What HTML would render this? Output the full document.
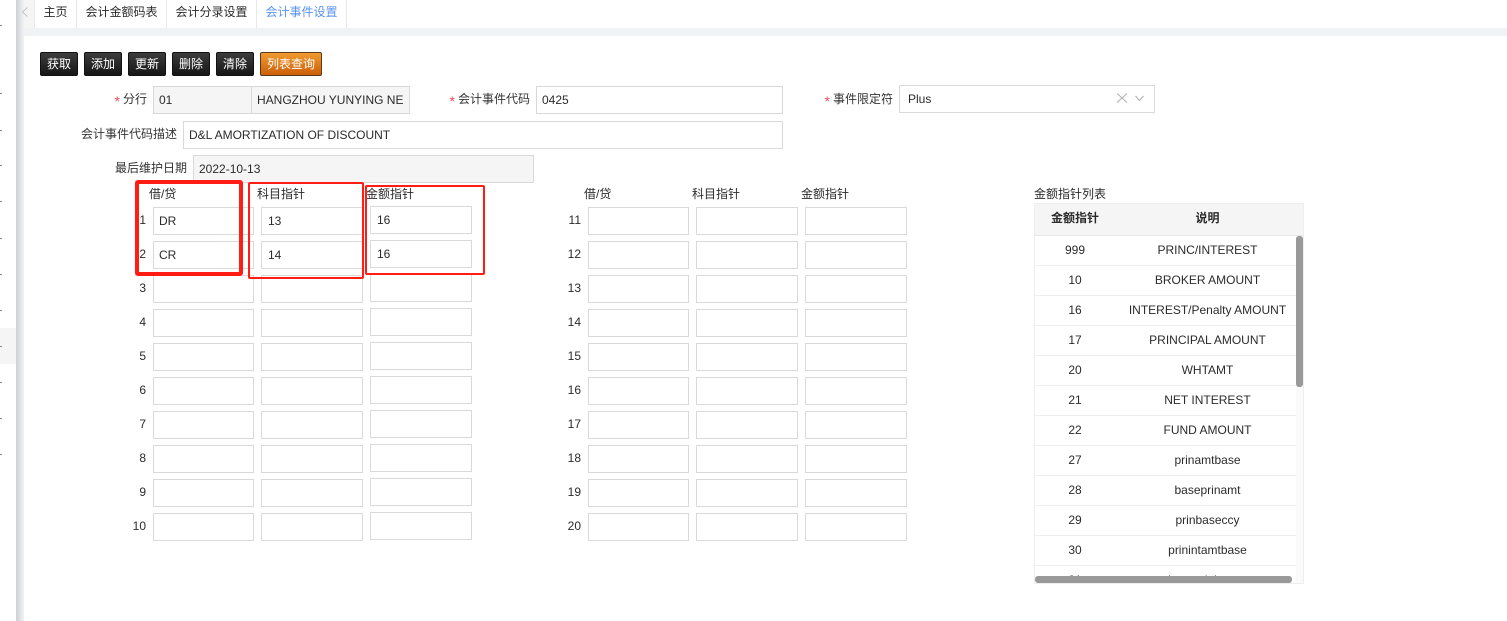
<!DOCTYPE html>
<html lang="zh"><head><meta charset="utf-8"><title>会计事件设置</title>
<style>
html,body{margin:0;padding:0;background:#fff;}
body{position:relative;width:1507px;height:621px;overflow:hidden;font:12px/14px "Liberation Sans","Noto Sans CJK SC",sans-serif;color:#2b2b2b;}
div,span{box-sizing:border-box;}
.a{position:absolute;}
.t{position:absolute;white-space:nowrap;}
.tab{position:absolute;top:0;height:28px;line-height:24px;text-align:center;border-right:1px solid #e8e8e8;background:#fff;color:#2b2b2b;}
.b{position:absolute;top:52px;height:24px;line-height:22px;text-align:center;color:#fff;border:1px solid #111;border-radius:2px;background:linear-gradient(#3c3c3c,#161616);}
.i{position:absolute;height:28px;border:1px solid #d9d9d9;background:#fff;line-height:26px;padding-left:5px;color:#2b2b2b;white-space:nowrap;overflow:hidden;}
.d{background:#f5f5f5;}
.l{position:absolute;text-align:right;white-space:nowrap;line-height:14px;color:#333;}
.s{color:#f5475f;margin-right:3px;font-size:14px;position:relative;top:3px;line-height:10px;}
.n{position:absolute;text-align:right;width:20px;line-height:14px;color:#2b2b2b;}
.k{position:absolute;width:2px;height:1px;left:0;background:#888;}
.r{position:absolute;left:1035px;width:261px;height:30px;line-height:29px;border-bottom:1px solid #eee;background:#fff;}
.r span{position:absolute;text-align:center;top:0;white-space:nowrap;}
.r .c1{left:0;width:80px;}
.r .c2{left:80px;width:185px;}
.box{position:absolute;border:2px solid #ff1d14;border-radius:2px;}
</style></head><body>

<div class="a" style="left:0;top:328px;width:16px;height:36px;background:#f5f5f5"></div>
<div class="k" style="top:25px"></div><div class="k" style="top:93px"></div><div class="k" style="top:130px"></div><div class="k" style="top:165px"></div>
<div class="k" style="top:201px"></div><div class="k" style="top:238px"></div><div class="k" style="top:274px"></div><div class="k" style="top:310px"></div><div class="k" style="top:346px"></div><div class="k" style="top:382px"></div><div class="k" style="top:418px"></div><div class="k" style="top:454px"></div>
<div class="a" style="left:16px;top:0;width:8px;height:621px;background:linear-gradient(90deg,#cfd0d4,#f0f2f5)"></div>

<div class="a" style="left:24px;top:28px;width:1483px;height:8px;background:#f0f2f5"></div>
<div class="a" style="left:24px;top:0;width:11px;height:28px;background:#f5f5f5;border-right:1px solid #e8e8e8"></div>
<svg class="a" style="left:16px;top:0" width="18" height="28" viewBox="0 0 18 28"><path d="M11.5 7.5 L6.5 12 L11.5 16.5" fill="none" stroke="#c4c4c4" stroke-width="1"/></svg>
<div class="tab" style="left:35px;width:42px">主页</div>
<div class="tab" style="left:77px;width:90px">会计金额码表</div>
<div class="tab" style="left:167px;width:90px">会计分录设置</div>
<div class="tab" style="left:257px;width:90px;color:#5a94f0">会计事件设置</div>

<div class="b" style="left:40px;width:38px">获取</div>
<div class="b" style="left:84px;width:38px">添加</div>
<div class="b" style="left:128px;width:38px">更新</div>
<div class="b" style="left:172px;width:38px">删除</div>
<div class="b" style="left:216px;width:38px">清除</div>
<div class="b" style="left:260px;width:62px;background:linear-gradient(#f09a30,#cc5f08);border-color:#5a3a1a">列表查询</div>

<div class="l" style="left:100px;top:92px;width:47px"><span class="s">*</span>分行</div>
<div class="i d" style="left:153px;top:86px;width:99px">01</div>
<div class="i d" style="left:251px;top:86px;width:159px">HANGZHOU YUNYING NE</div>
<div class="l" style="left:430px;top:92px;width:100px"><span class="s">*</span>会计事件代码</div>
<div class="i" style="left:536px;top:86px;width:247px">0425</div>
<div class="l" style="left:800px;top:92px;width:93px"><span class="s">*</span>事件限定符</div>
<div class="i" style="left:899px;top:85px;width:256px;padding-left:8px">Plus</div>
<svg class="a" style="left:1116px;top:92px" width="30" height="12" viewBox="0 0 30 12"><path d="M1 1.5 L11 10.5 M11 1.5 L1 10.5" fill="none" stroke="#aeaeae" stroke-width="1"/><path d="M19.5 4 L23.5 8.5 L27.5 4" fill="none" stroke="#aeaeae" stroke-width="1"/></svg>

<div class="l" style="left:70px;top:127px;width:107px">会计事件代码描述</div>
<div class="i" style="left:183px;top:121px;width:600px">D&amp;L AMORTIZATION OF DISCOUNT</div>
<div class="l" style="left:100px;top:161px;width:87px">最后维护日期</div>
<div class="i d" style="left:193px;top:155px;width:341px">2022-10-13</div>

<div class="t" style="left:149px;top:187px">借/贷</div>
<div class="t" style="left:257px;top:187px">科目指针</div>
<div class="t" style="left:366px;top:187px">金额指针</div>
<div class="t" style="left:584px;top:187px">借/贷</div>
<div class="t" style="left:692px;top:187px">科目指针</div>
<div class="t" style="left:801px;top:187px">金额指针</div>
<div class="t" style="left:1034px;top:187px">金额指针列表</div>

<div class="n" style="left:126px;top:213px">1</div>
<div class="i" style="left:153px;top:207px;width:101px">DR</div><div class="i" style="left:261px;top:207px;width:102px;padding-left:6px">13</div><div class="i" style="left:370px;top:206px;width:102px;padding-left:6px">16</div>
<div class="n" style="left:126px;top:247px">2</div>
<div class="i" style="left:153px;top:241px;width:101px">CR</div><div class="i" style="left:261px;top:241px;width:102px;padding-left:6px">14</div><div class="i" style="left:370px;top:240px;width:102px;padding-left:6px">16</div>
<div class="n" style="left:126px;top:281px">3</div>
<div class="i" style="left:153px;top:275px;width:101px"></div><div class="i" style="left:261px;top:275px;width:102px"></div><div class="i" style="left:370px;top:274px;width:102px"></div>
<div class="n" style="left:126px;top:315px">4</div>
<div class="i" style="left:153px;top:309px;width:101px"></div><div class="i" style="left:261px;top:309px;width:102px"></div><div class="i" style="left:370px;top:308px;width:102px"></div>
<div class="n" style="left:126px;top:349px">5</div>
<div class="i" style="left:153px;top:343px;width:101px"></div><div class="i" style="left:261px;top:343px;width:102px"></div><div class="i" style="left:370px;top:342px;width:102px"></div>
<div class="n" style="left:126px;top:383px">6</div>
<div class="i" style="left:153px;top:377px;width:101px"></div><div class="i" style="left:261px;top:377px;width:102px"></div><div class="i" style="left:370px;top:376px;width:102px"></div>
<div class="n" style="left:126px;top:417px">7</div>
<div class="i" style="left:153px;top:411px;width:101px"></div><div class="i" style="left:261px;top:411px;width:102px"></div><div class="i" style="left:370px;top:410px;width:102px"></div>
<div class="n" style="left:126px;top:451px">8</div>
<div class="i" style="left:153px;top:445px;width:101px"></div><div class="i" style="left:261px;top:445px;width:102px"></div><div class="i" style="left:370px;top:444px;width:102px"></div>
<div class="n" style="left:126px;top:485px">9</div>
<div class="i" style="left:153px;top:479px;width:101px"></div><div class="i" style="left:261px;top:479px;width:102px"></div><div class="i" style="left:370px;top:478px;width:102px"></div>
<div class="n" style="left:126px;top:519px">10</div>
<div class="i" style="left:153px;top:513px;width:101px"></div><div class="i" style="left:261px;top:513px;width:102px"></div><div class="i" style="left:370px;top:512px;width:102px"></div>

<div class="n" style="left:561px;top:213px">11</div><div class="i" style="left:588px;top:207px;width:101px"></div><div class="i" style="left:696px;top:207px;width:102px"></div><div class="i" style="left:805px;top:207px;width:102px"></div>
<div class="n" style="left:561px;top:247px">12</div><div class="i" style="left:588px;top:241px;width:101px"></div><div class="i" style="left:696px;top:241px;width:102px"></div><div class="i" style="left:805px;top:241px;width:102px"></div>
<div class="n" style="left:561px;top:281px">13</div><div class="i" style="left:588px;top:275px;width:101px"></div><div class="i" style="left:696px;top:275px;width:102px"></div><div class="i" style="left:805px;top:275px;width:102px"></div>
<div class="n" style="left:561px;top:315px">14</div><div class="i" style="left:588px;top:309px;width:101px"></div><div class="i" style="left:696px;top:309px;width:102px"></div><div class="i" style="left:805px;top:309px;width:102px"></div>
<div class="n" style="left:561px;top:349px">15</div><div class="i" style="left:588px;top:343px;width:101px"></div><div class="i" style="left:696px;top:343px;width:102px"></div><div class="i" style="left:805px;top:343px;width:102px"></div>
<div class="n" style="left:561px;top:383px">16</div><div class="i" style="left:588px;top:377px;width:101px"></div><div class="i" style="left:696px;top:377px;width:102px"></div><div class="i" style="left:805px;top:377px;width:102px"></div>
<div class="n" style="left:561px;top:417px">17</div><div class="i" style="left:588px;top:411px;width:101px"></div><div class="i" style="left:696px;top:411px;width:102px"></div><div class="i" style="left:805px;top:411px;width:102px"></div>
<div class="n" style="left:561px;top:451px">18</div><div class="i" style="left:588px;top:445px;width:101px"></div><div class="i" style="left:696px;top:445px;width:102px"></div><div class="i" style="left:805px;top:445px;width:102px"></div>
<div class="n" style="left:561px;top:485px">19</div><div class="i" style="left:588px;top:479px;width:101px"></div><div class="i" style="left:696px;top:479px;width:102px"></div><div class="i" style="left:805px;top:479px;width:102px"></div>
<div class="n" style="left:561px;top:519px">20</div><div class="i" style="left:588px;top:513px;width:101px"></div><div class="i" style="left:696px;top:513px;width:102px"></div><div class="i" style="left:805px;top:513px;width:102px"></div>

<div class="box" style="left:135px;top:180px;width:108px;height:96px;border-width:4px;border-radius:3px"></div>
<div class="box" style="left:248px;top:182px;width:116px;height:97px"></div>
<div class="box" style="left:365px;top:185px;width:120px;height:90px"></div>

<div class="a" style="left:1034px;top:203px;width:270px;height:381px;border:1px solid #eee;background:#fafafa"></div>
<div class="a" style="left:1035px;top:204px;width:268px;height:32px;background:#f5f5f5;border-bottom:1px solid #e8e8e8;font-weight:bold;color:#2b2b2b;line-height:29px">
<span class="t" style="left:0;width:80px;text-align:center">金额指针</span><span class="t" style="left:80px;width:185px;text-align:center">说明</span></div>

<div class="r" style="top:236px"><span class="c1">999</span><span class="c2">PRINC/INTEREST</span></div>
<div class="r" style="top:266px"><span class="c1">10</span><span class="c2">BROKER AMOUNT</span></div>
<div class="r" style="top:296px"><span class="c1">16</span><span class="c2">INTEREST/Penalty AMOUNT</span></div>
<div class="r" style="top:326px"><span class="c1">17</span><span class="c2">PRINCIPAL AMOUNT</span></div>
<div class="r" style="top:356px"><span class="c1">20</span><span class="c2">WHTAMT</span></div>
<div class="r" style="top:386px"><span class="c1">21</span><span class="c2">NET INTEREST</span></div>
<div class="r" style="top:416px"><span class="c1">22</span><span class="c2">FUND AMOUNT</span></div>
<div class="r" style="top:446px"><span class="c1">27</span><span class="c2">prinamtbase</span></div>
<div class="r" style="top:476px"><span class="c1">28</span><span class="c2">baseprinamt</span></div>
<div class="r" style="top:506px"><span class="c1">29</span><span class="c2">prinbaseccy</span></div>
<div class="r" style="top:536px"><span class="c1">30</span><span class="c2">prinintamtbase</span></div>
<div class="r" style="top:566px;height:17px;border:0;overflow:hidden"><span class="c1">31</span><span class="c2">baseprinintamt</span></div>

<div class="a" style="left:1296px;top:236px;width:7px;height:151px;background:#999;border-radius:3px"></div>
<div class="a" style="left:1035px;top:576px;width:257px;height:7px;background:#999;border-radius:3px"></div>
</body></html>
